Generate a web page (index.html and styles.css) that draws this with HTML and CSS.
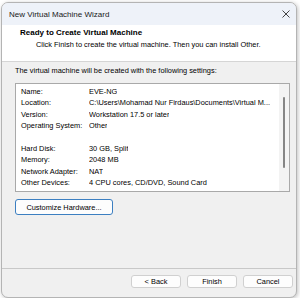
FILE: index.html
```html
<!DOCTYPE html>
<html lang="en">
<head>
    <meta charset="UTF-8">
    <title>New Virtual Machine Wizard</title>
    <link rel="stylesheet" href="styles.css">
</head>
<body>
    <div class="window">
        <div class="titlebar">
            <span class="title">New Virtual Machine Wizard</span>
            <svg class="close" width="8" height="8" viewBox="0 0 8 8">
                <path d="M0.5 0.5 L7.5 7.5 M7.5 0.5 L0.5 7.5" stroke="#444" stroke-width="1" fill="none"/>
            </svg>
        </div>

        <div class="header">
            <div class="heading">Ready to Create Virtual Machine</div>
            <div class="subheading">Click Finish to create the virtual machine. Then you can install Other.</div>
        </div>

        <div class="content">
            <p class="intro">The virtual machine will be created with the following settings:</p>

            <div class="summary">
                <div class="rows">
                    <div class="row"><span class="key">Name:</span><span class="val">EVE-NG</span></div>
                    <div class="row"><span class="key">Location:</span><span class="val">C:\Users\Mohamad Nur Firdaus\Documents\Virtual M...</span></div>
                    <div class="row"><span class="key">Version:</span><span class="val">Workstation 17.5 or later</span></div>
                    <div class="row"><span class="key">Operating System:</span><span class="val">Other</span></div>
                    <div class="row"></div>
                    <div class="row"><span class="key">Hard Disk:</span><span class="val">30 GB, Split</span></div>
                    <div class="row"><span class="key">Memory:</span><span class="val">2048 MB</span></div>
                    <div class="row"><span class="key">Network Adapter:</span><span class="val">NAT</span></div>
                    <div class="row"><span class="key">Other Devices:</span><span class="val">4 CPU cores, CD/DVD, Sound Card</span></div>
                </div>
                <div class="scrollbar"><div class="thumb"></div></div>
            </div>

            <button type="button" class="btn customize">Customize Hardware...</button>
        </div>

        <div class="footer">
            <button type="button" class="btn">&lt; Back</button>
            <button type="button" class="btn">Finish</button>
            <button type="button" class="btn">Cancel</button>
        </div>
    </div>
</body>
</html>
```

FILE: styles.css
```css
body {
    margin: 0;
    background-color: #ffffff;
    font-family: "Liberation Sans", Arial, sans-serif;
    font-size: 7.4px;
    color: #000;
}
.window {
    margin: 2px 0 0 1px;
    width: 294px;
    height: 294px;
    border: 1px solid #b4b4b4;
    border-radius: 7px;
    background-color: #f0f0f0;
    box-shadow: 1px 1px 4px rgba(0,0,0,0.25);
    display: flex;
    flex-direction: column;
    overflow: hidden;
}
.titlebar {
    height: 22px;
    flex-shrink: 0;
    background-color: #eef2f9;
    display: flex;
    align-items: center;
    justify-content: space-between;
    padding: 0 6px 0 7px;
}
.title {
    font-size: 8px;
    color: #1a1a1a;
}
.close {
    margin-top: -1px;
}
.header {
    height: 37px;
    flex-shrink: 0;
    box-sizing: border-box;
    background-color: #ffffff;
    border-bottom: 1px solid #d5d5d5;
    padding: 2px 0 0 18px;
}
.heading {
    font-weight: bold;
    font-size: 8px;
    line-height: 12px;
}
.subheading {
    margin-left: 16px;
    line-height: 12px;
}
.content {
    flex: 1;
    padding: 0 6px 0 13px;
}
.intro {
    margin: 3px 0 0;
    line-height: 12px;
}
.summary {
    margin-top: 6px;
    height: 107px;
    border: 1px solid #a9a9a9;
    background-color: #ffffff;
    display: flex;
}
.rows {
    flex: 1;
    padding: 2px 0 0 5px;
    overflow: hidden;
}
.row {
    height: 11.4px;
    line-height: 11.4px;
    display: flex;
    white-space: nowrap;
}
.key {
    width: 68px;
    flex-shrink: 0;
}
.val {
    overflow: hidden;
}
.scrollbar {
    width: 10px;
    background-color: #f3f3f3;
    display: flex;
    justify-content: center;
    padding-top: 13px;
}
.thumb {
    width: 2px;
    height: 71px;
    background-color: #858585;
    border-radius: 1px;
}
.btn {
    font-family: inherit;
    font-size: 7.4px;
    color: #000;
    background-color: #fdfdfd;
    border: 1px solid #d0d0d0;
    border-radius: 3px;
    padding: 0;
}
.customize {
    margin-top: 7px;
    width: 98px;
    height: 16px;
    border-color: #3c7fc1;
}
.footer {
    height: 22px;
    flex-shrink: 0;
    border-top: 1px solid #c8c8c8;
    display: flex;
    justify-content: flex-end;
    gap: 6px;
    padding: 6px 3px 0 0;
}
.footer .btn {
    width: 50px;
    height: 13px;
}
```
